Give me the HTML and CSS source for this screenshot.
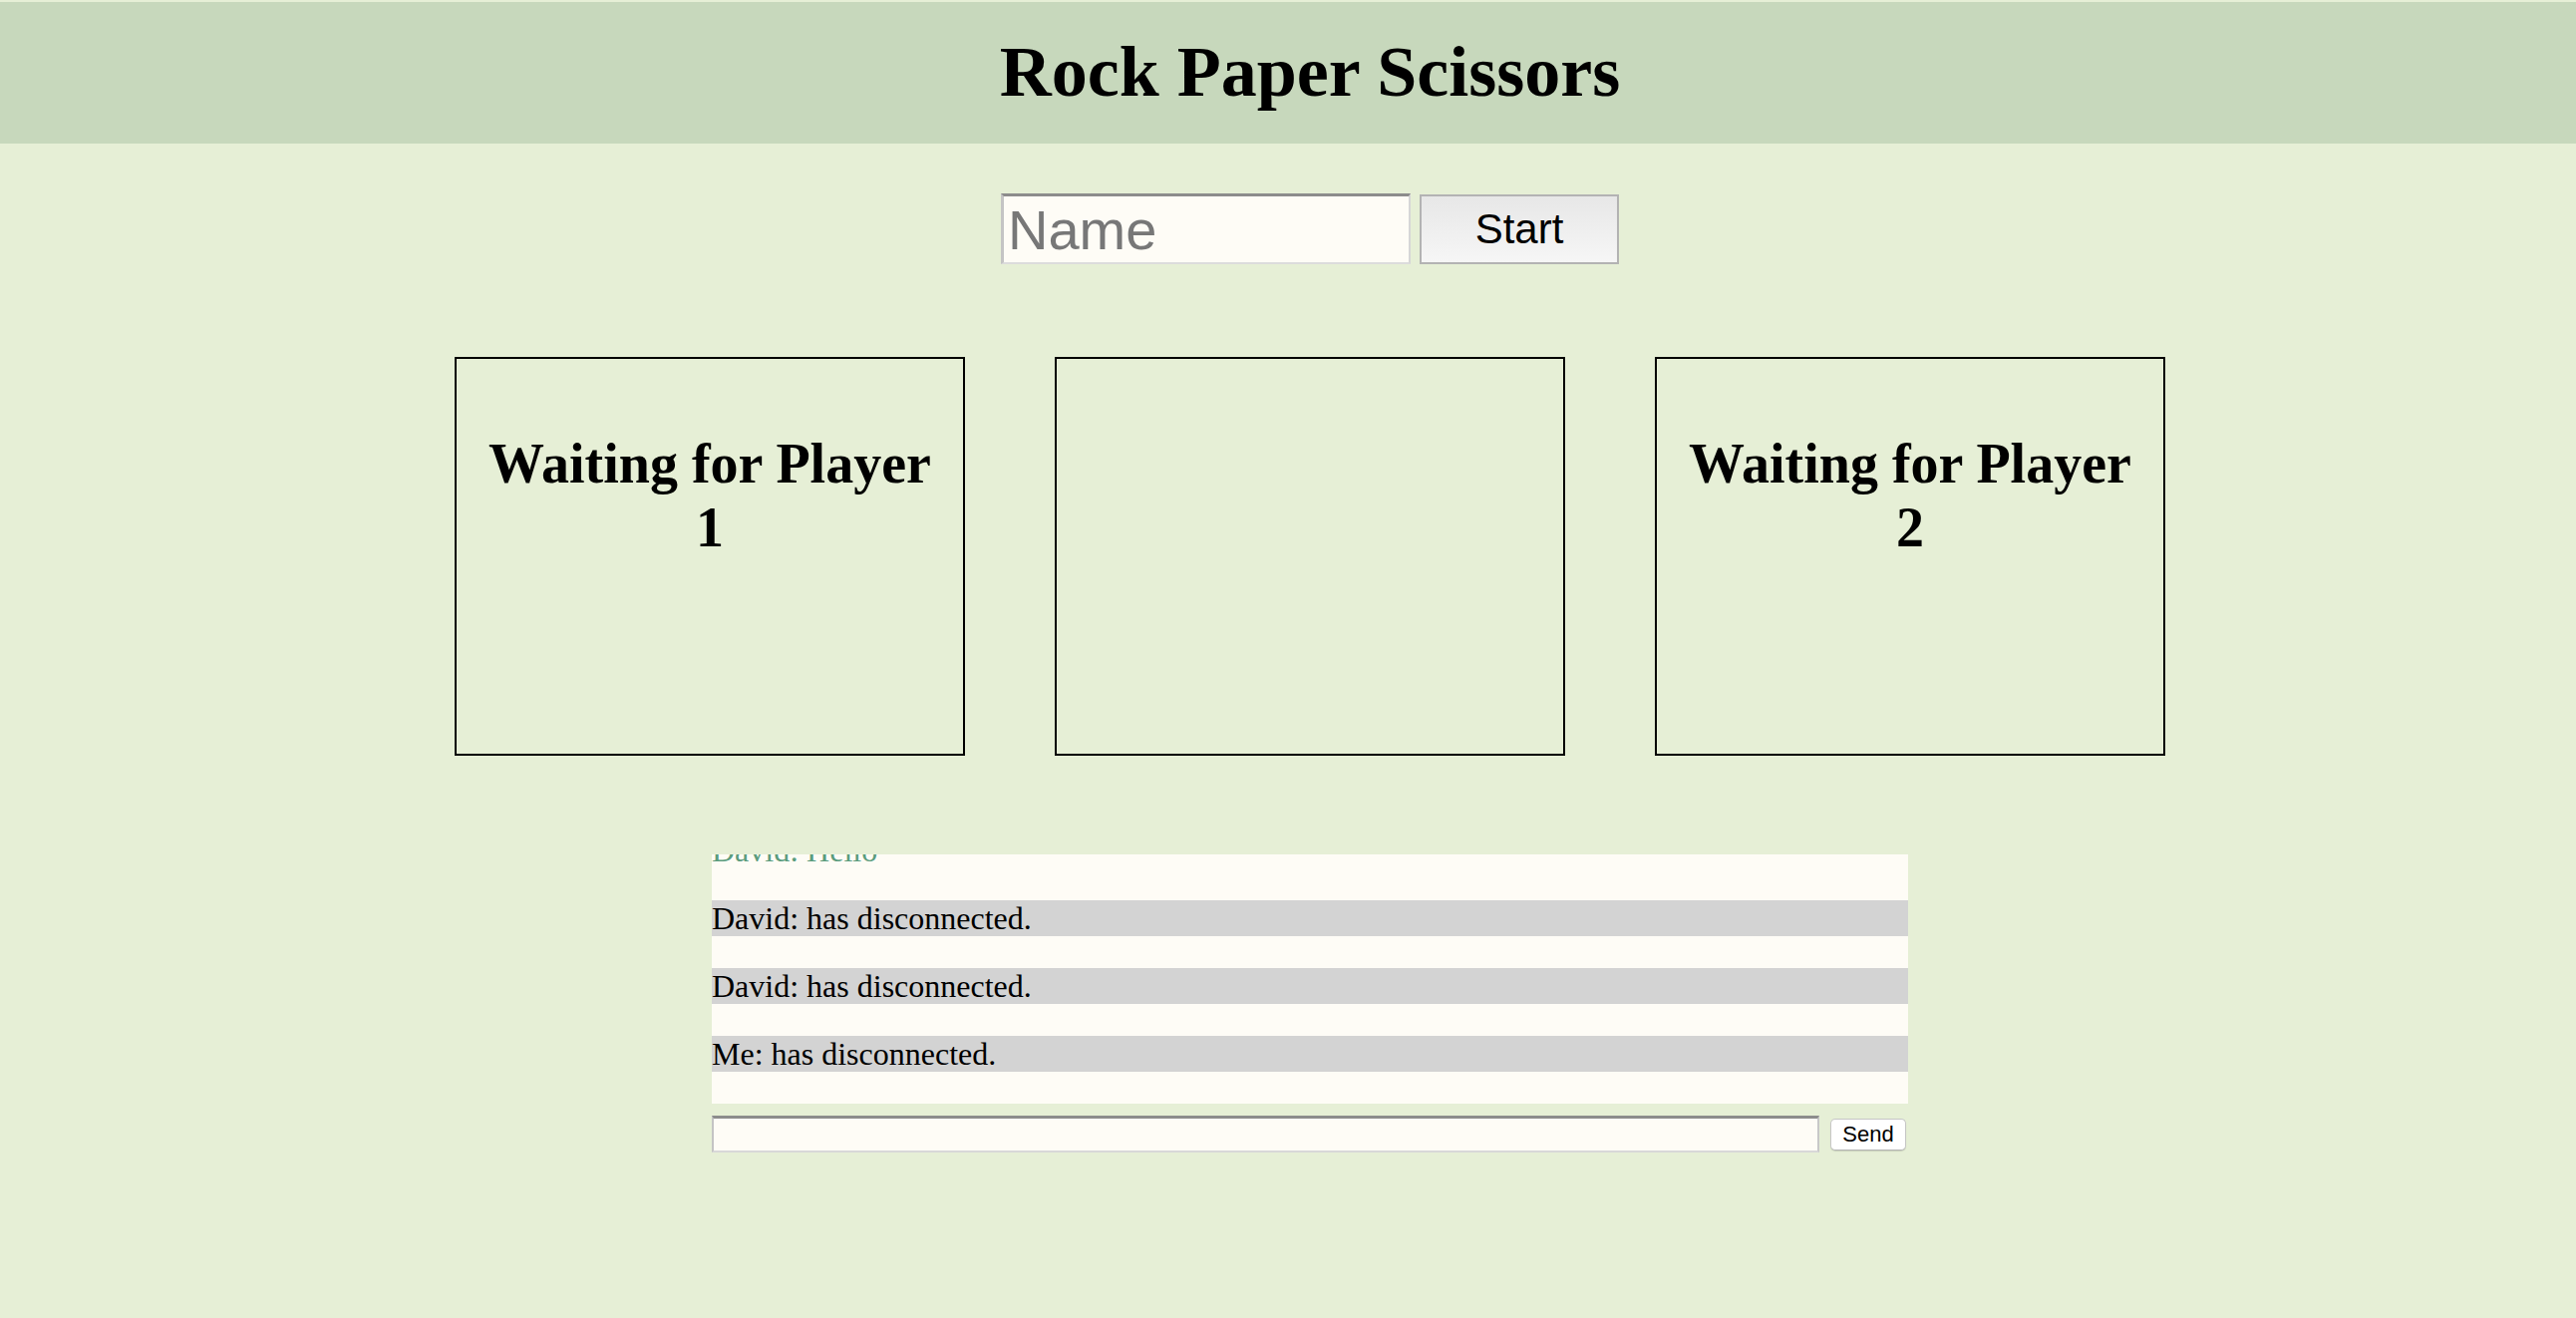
FILE: index.html
```html
<!DOCTYPE html>
<html lang="en">
<head>
<meta charset="utf-8">
<title>Rock Paper Scissors</title>
<link rel="stylesheet" href="styles.css">
</head>
<body>
<header class="header">
  <h1 class="title">Rock Paper Scissors</h1>
</header>
<main class="main">
  <form class="join">
    <input class="name-input" type="text" placeholder="Name">
    <button class="start-btn" type="button">Start</button>
  </form>
  <section class="arena">
    <div class="panel"><h2 class="panel-title">Waiting for Player 1</h2></div>
    <div class="panel"></div>
    <div class="panel"><h2 class="panel-title">Waiting for Player 2</h2></div>
  </section>
  <section class="chat">
    <div class="chat-log">
      <p class="msg msg-chat">David: Hello</p>
      <p class="msg msg-system">David: has disconnected.</p>
      <p class="msg msg-system">David: has disconnected.</p>
      <p class="msg msg-system">Me: has disconnected.</p>
    </div>
    <form class="chat-form">
      <input class="chat-input" type="text">
      <button class="send-btn" type="button">Send</button>
    </form>
  </section>
</main>
</body>
</html>
```
FILE: styles.css
```css
html, body {
  margin: 0;
  padding: 0;
}
body {
  background: #e6efd6;
  font-family: "Liberation Serif", "Times New Roman", serif;
  color: #000;
  padding-top: 2px;
}
.header {
  height: 142px;
  box-sizing: border-box;
  background: #c7d8bc;
  padding: 29px 0 0 44px;
}
.title {
  margin: 0;
  text-align: center;
  font-size: 72px;
  line-height: 83px;
  font-weight: bold;
}
.main {
  padding-left: 44px;
  display: flex;
  flex-direction: column;
  align-items: center;
}
.join {
  margin: 50px 0 0;
  display: flex;
  align-items: center;
  gap: 9px;
}
.name-input {
  box-sizing: border-box;
  width: 411px;
  height: 71px;
  margin: 0;
  padding: 0 4px;
  background: #fefcf6;
  border-style: solid;
  border-width: 3px 2px 2px 3px;
  border-color: #8c8c8c #d6d6d6 #dcdcdc #c4c4c4;
  font-family: "Liberation Sans", Arial, sans-serif;
  font-size: 56px;
  color: #000;
  outline: none;
}
.name-input::placeholder {
  color: #777;
}
.start-btn {
  box-sizing: border-box;
  width: 200px;
  height: 70px;
  margin: 0;
  padding: 0;
  border: 2px solid #b3b3b3;
  background: linear-gradient(#e7e7e7, #f6f6f6);
  font-family: "Liberation Sans", Arial, sans-serif;
  font-size: 42px;
  color: #000;
}
.arena {
  margin-top: 93px;
  display: flex;
  gap: 90px;
}
.panel {
  box-sizing: border-box;
  width: 512px;
  height: 400px;
  border: 2px solid #000;
  padding: 73px 24px 0;
}
.panel-title {
  margin: 0;
  text-align: center;
  font-size: 56px;
  line-height: 64px;
  font-weight: bold;
}
.chat {
  margin-top: 99px;
  width: 1200px;
}
.chat-log {
  height: 250px;
  overflow: hidden;
  background: #fefcf6;
  display: flex;
  flex-direction: column;
  justify-content: flex-end;
}
.msg {
  flex: none;
  margin: 0 0 32px;
  font-size: 32px;
  line-height: 36px;
  height: 36px;
}
.msg-chat {
  color: #5b9c7d;
}
.msg-system {
  background: #d3d3d3;
}
.chat-form {
  margin: 12px 0 0;
  display: flex;
  align-items: center;
  gap: 11px;
}
.chat-input {
  box-sizing: border-box;
  width: 1111px;
  height: 37px;
  margin: 0;
  padding: 0 4px;
  background: #fefcf6;
  border-style: solid;
  border-width: 3px 2px 2px 2px;
  border-color: #8c8c8c #c8c8c8 #d8d8d8 #c4c4c4;
  font-size: 22px;
  outline: none;
}
.send-btn {
  box-sizing: border-box;
  width: 76px;
  height: 32px;
  margin: 0;
  padding: 0;
  background: #fff;
  border: 1px solid #c6c6c6;
  border-bottom-color: #b4b4b4;
  border-radius: 5px;
  box-shadow: 0 1px 1px rgba(0, 0, 0, 0.12);
  font-family: "Liberation Sans", Arial, sans-serif;
  font-size: 22px;
  color: #000;
}
```
